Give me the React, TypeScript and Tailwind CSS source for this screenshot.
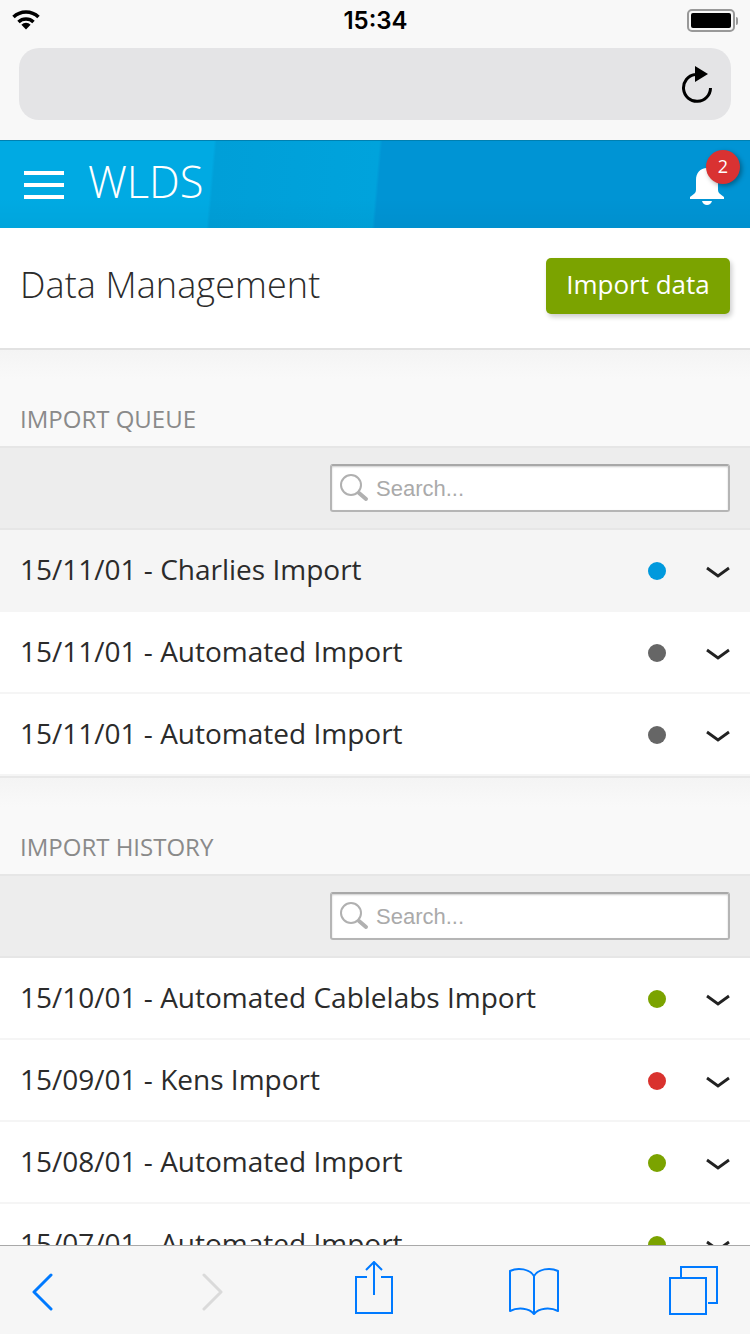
const queue = [
  { label: '15/11/01 - Charlies Import', dot: 'bg-[#0099dd]', active: true },
  { label: '15/11/01 - Automated Import', dot: 'bg-[#666666]' },
  { label: '15/11/01 - Automated Import', dot: 'bg-[#666666]' },
];

const history = [
  { label: '15/10/01 - Automated Cablelabs Import', dot: 'bg-[#7ba300]' },
  { label: '15/09/01 - Kens Import', dot: 'bg-[#d9322e]' },
  { label: '15/08/01 - Automated Import', dot: 'bg-[#7ba300]' },
  { label: '15/07/01 - Automated Import', dot: 'bg-[#7ba300]' },
];

function Row({ label, dot, active }: { label: string; dot: string; active?: boolean }) {
  return (
    <div className={`flex h-[82px] items-center border-b-2 border-[#f5f5f5] pl-[20px] pr-[20px] ${active ? 'bg-[#f5f5f5]' : 'bg-white'}`}>
      <span className="mb-[2px] flex-1 text-[28px] text-[#2b2b2b]">{label}</span>
      <span className={`mt-[2px] h-[18px] w-[18px] rounded-full ${dot}`} />
      <svg className="ml-[40px] mt-[4px]" width="24" height="12" viewBox="0 0 24 12" fill="none">
        <path d="M1 2l11 8L23 2" stroke="#222222" strokeWidth="2.800" />
      </svg>
    </div>
  );
}

function SearchBar() {
  return (
    <div className="flex h-[84px] items-center justify-end border-y-2 border-[#e6e6e6] bg-[#ededed] pr-[20px]">
      <div className="flex h-[48px] w-[400px] items-center rounded-[3px] border-2 border-[#b5b5b5] border-t-[#a8a8a8] bg-white pl-[7px] shadow-[inset_0_1px_2px_rgba(0,0,0,0.2)]">
        <svg width="30" height="30" viewBox="0 0 30 30" fill="none">
          <circle cx="12" cy="12" r="10" stroke="#b0b0b0" strokeWidth="2" />
          <path d="M20 20l7 6" stroke="#b0b0b0" strokeWidth="4" strokeLinecap="round" />
        </svg>
        <span className="ml-[7px] font-['Liberation_Sans',sans-serif] text-[22px] text-[#aaaaaa]">Search...</span>
      </div>
    </div>
  );
}

export default function App() {
  return (
    <div className="relative h-[1334px] w-[750px] overflow-hidden bg-white font-['Open_Sans',sans-serif]">
      {/* Browser chrome */}
      <div className="h-[140px] bg-[#f8f8f8] px-[19px]">
        <div className="relative flex h-[48px] items-center justify-center">
          <svg className="absolute left-[-7px] top-[9px]" width="28" height="21" viewBox="0 0 28 21" fill="none" stroke="#000000" strokeWidth="3.500">
            <path d="M1.500 8A18 18 0 0 1 26.500 8" />
            <path d="M6.500 13A11 11 0 0 1 21.500 13" />
            <path d="M14 20.500l-4.600-4.800a6.500 6.500 0 0 1 9.200 0z" fill="#000000" strokeWidth="0" />
          </svg>
          <span className="mb-[7px] ml-[1px] font-['Inter',sans-serif] text-[24px] font-semibold leading-none text-black">15:34</span>
          <div className="absolute right-[-7px] top-[9px] flex items-center">
            <div className="flex h-[23px] w-[48px] rounded-[5px] border-2 border-[#999999] p-[2px]">
              <div className="flex-1 rounded-[2px] bg-black" />
            </div>
            <div className="ml-[1px] h-[8px] w-[2px] rounded-r-[2px] bg-[#999999]" />
          </div>
        </div>
        <div className="flex h-[72px] items-center justify-end rounded-[20px] bg-[#e4e4e6] pr-[18px]">
          <svg width="32" height="38" viewBox="0 0 32 38" fill="none">
            <path d="M14 9.500A13.500 13.500 0 1 0 29.500 23" stroke="#000000" strokeWidth="3" />
            <path d="M14 1l13 8-13 8z" fill="#000000" />
          </svg>
        </div>
      </div>

      {/* App header */}
      <div className="flex h-[88px] items-center border-t border-[#0080b0] bg-[linear-gradient(180deg,transparent_65%,rgba(0,0,0,0.03)_100%),linear-gradient(95deg,#00aae3_0,#00aae3_213px,#009fd8_216px,#00a3dc_378px,#0094d4_381px,#0094d4_100%)] pl-[24px] pr-[10px]">
        <div className="mb-[-1px] flex h-[28px] w-[40px] flex-col justify-between">
          <div className="h-[4px] bg-white" />
          <div className="h-[4px] bg-white" />
          <div className="h-[4px] bg-white" />
        </div>
        <span className="mb-[6px] ml-[24px] flex-1 text-[43.500px] font-light leading-none text-white">WLDS</span>
        <div className="relative mr-[16px] mt-[2px] h-[44px] w-[34px]">
          <svg width="34" height="44" viewBox="0 0 34 44" fill="#ffffff">
            <path d="M17 4c-7 0-11 5-11 12v10c0 3-2 4-6 7v2h34v-2c-4-3-6-4-6-7V16c0-7-4-12-11-12z" />
            <path d="M12 37h10c-.8 2.600-2.600 4-5 4s-4.200-1.400-5-4z" />
          </svg>
          <div className="absolute left-[16px] top-[-14px] flex h-[34px] w-[34px] items-center justify-center rounded-full bg-[#d93232] text-[18px] text-white shadow-[2px_2px_5px_rgba(0,0,0,0.35)]">
            2
          </div>
        </div>
      </div>

      {/* Page title */}
      <div className="flex h-[122px] items-center justify-between border-b-2 border-[#e2e2e2] pb-[4px] pl-[20px] pr-[20px]">
        <h1 className="mb-[2px] text-[36px] font-light tracking-[0.1px] text-[#2b2b2b]">Data Management</h1>
        <button className="h-[56px] w-[184px] rounded-[5px] bg-[#7ba300] pb-[3px] text-[26px] text-white shadow-[2px_3px_5px_rgba(0,0,0,0.2)]">
          Import data
        </button>
      </div>

      <div className="flex h-[96px] items-end bg-[linear-gradient(180deg,#f4f4f4_0,#f9f9f9_30%)] pb-[12px] pl-[20px]">
        <h2 className="text-[24px] leading-[30px] text-[#8a8a8a]">IMPORT QUEUE</h2>
      </div>
      <SearchBar />
      {queue.map((item, i) => (
        <Row key={i} {...item} />
      ))}

      <div className="flex h-[98px] items-end border-t-2 border-[#e8e8e8] bg-[linear-gradient(180deg,#f4f4f4_0,#f9f9f9_30%)] pb-[12px] pl-[20px]">
        <h2 className="text-[24px] leading-[30px] text-[#8a8a8a]">IMPORT HISTORY</h2>
      </div>
      <SearchBar />
      {history.map((item, i) => (
        <Row key={i} {...item} />
      ))}

      {/* Safari toolbar */}
      <div className="absolute bottom-0 left-0 flex h-[89px] w-full items-center border-t border-[#a9a9a9] bg-[#f6f6f6]">
        <svg className="absolute left-[31px] top-[27px]" width="24" height="38" viewBox="0 0 24 38" fill="none">
          <path d="M20 2L3 19l17 17" stroke="#007aff" strokeWidth="3" strokeLinecap="round" strokeLinejoin="round" />
        </svg>
        <svg className="absolute left-[201px] top-[27px]" width="24" height="38" viewBox="0 0 24 38" fill="none">
          <path d="M3 2l17 17L3 36" stroke="#dadada" strokeWidth="3" strokeLinecap="round" strokeLinejoin="round" />
        </svg>
        <svg className="absolute left-[355px] top-[15px]" width="40" height="54" viewBox="0 0 40 54" fill="none" stroke="#007aff" strokeWidth="2">
          <path d="M12 16H1v36h36V16H26" />
          <path d="M19 1v33M11 9l8-8 8 8" />
        </svg>
        <svg className="absolute left-[508px] top-[20px]" width="52" height="50" viewBox="0 0 52 50" fill="none" stroke="#007aff" strokeWidth="2" strokeLinejoin="round">
          <path d="M26 10C22 3 10 1 2 5v40c8-4 19-3 24 3 5-6 16-7 24-3V5C42 1 30 3 26 10z" />
          <path d="M26 10v38" />
        </svg>
        <svg className="absolute left-[668px] top-[19px]" width="52" height="50" viewBox="0 0 52 50" fill="none" stroke="#007aff" strokeWidth="2">
          <path d="M13 12V2h36v36H40" />
          <rect x="2" y="13" width="36" height="36" />
        </svg>
      </div>
    </div>
  );
}
